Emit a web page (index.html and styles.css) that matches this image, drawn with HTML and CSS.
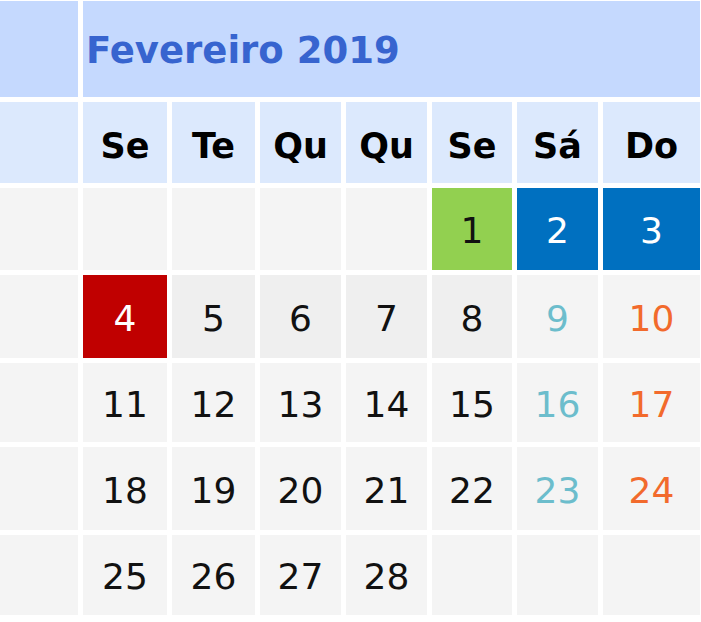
FILE: index.html
```html
<!DOCTYPE html>
<html lang="pt">
<head>
<meta charset="utf-8">
<title>Fevereiro 2019</title>
<link rel="stylesheet" href="styles.css">
</head>
<body>
<div class="cal">
  <div class="c corner"></div>
  <div class="c title">Fevereiro 2019</div>

  <div class="c wk"></div>
  <div class="c wd">Se</div>
  <div class="c wd">Te</div>
  <div class="c wd">Qu</div>
  <div class="c wd">Qu</div>
  <div class="c wd">Se</div>
  <div class="c wd">Sá</div>
  <div class="c wd">Do</div>

  <div class="c d"></div>
  <div class="c d"></div>
  <div class="c d"></div>
  <div class="c d"></div>
  <div class="c d"></div>
  <div class="c d green">1</div>
  <div class="c d blue">2</div>
  <div class="c d blue">3</div>

  <div class="c d"></div>
  <div class="c d red">4</div>
  <div class="c d cur">5</div>
  <div class="c d cur">6</div>
  <div class="c d cur">7</div>
  <div class="c d cur">8</div>
  <div class="c d sat">9</div>
  <div class="c d sun">10</div>

  <div class="c d"></div>
  <div class="c d">11</div>
  <div class="c d">12</div>
  <div class="c d">13</div>
  <div class="c d">14</div>
  <div class="c d">15</div>
  <div class="c d sat">16</div>
  <div class="c d sun">17</div>

  <div class="c d"></div>
  <div class="c d">18</div>
  <div class="c d">19</div>
  <div class="c d">20</div>
  <div class="c d">21</div>
  <div class="c d">22</div>
  <div class="c d sat">23</div>
  <div class="c d sun">24</div>

  <div class="c d"></div>
  <div class="c d">25</div>
  <div class="c d">26</div>
  <div class="c d">27</div>
  <div class="c d">28</div>
  <div class="c d"></div>
  <div class="c d"></div>
  <div class="c d"></div>
</div>
</body>
</html>
```

FILE: styles.css
```css
html, body {
  margin: 0;
  padding: 0;
  background: #ffffff;
}

body {
  width: 701px;
  height: 622px;
  overflow: hidden;
  font-family: "DejaVu Sans", Verdana, sans-serif;
}

.cal {
  display: grid;
  grid-template-columns: 78px 84px 83px 81px 81px 80px 81px 97px;
  grid-template-rows: 96px 81px 82px 83px 79px 83px 80px;
  column-gap: 5px;
  row-gap: 5px;
  padding-top: 1px;
}

.c {
  display: flex;
  align-items: center;
  justify-content: center;
  font-size: 36px;
  color: #111111;
}

.corner {
  background: #c5d9fe;
}

.title {
  grid-column: 2 / span 7;
  background: #c5d9fe;
  justify-content: flex-start;
  padding-left: 3px;
  padding-top: 3px;
  font-weight: bold;
  font-size: 37px;
  color: #3764cf;
}

.wk {
  background: #dce9fd;
}

.wd {
  background: #dce9fd;
  font-weight: bold;
  font-size: 35px;
  color: #000000;
  padding-top: 6px;
}

.d {
  background: #f4f4f4;
  padding-top: 3px;
}

.cur {
  background: #efefef;
}

.green {
  background: #92d050;
  color: #111111;
}

.blue {
  background: #0070c0;
  color: #ffffff;
}

.red {
  background: #c00000;
  color: #ffffff;
}

.sat {
  color: #6cbdcc;
}

.sun {
  color: #f26a2c;
}
```
